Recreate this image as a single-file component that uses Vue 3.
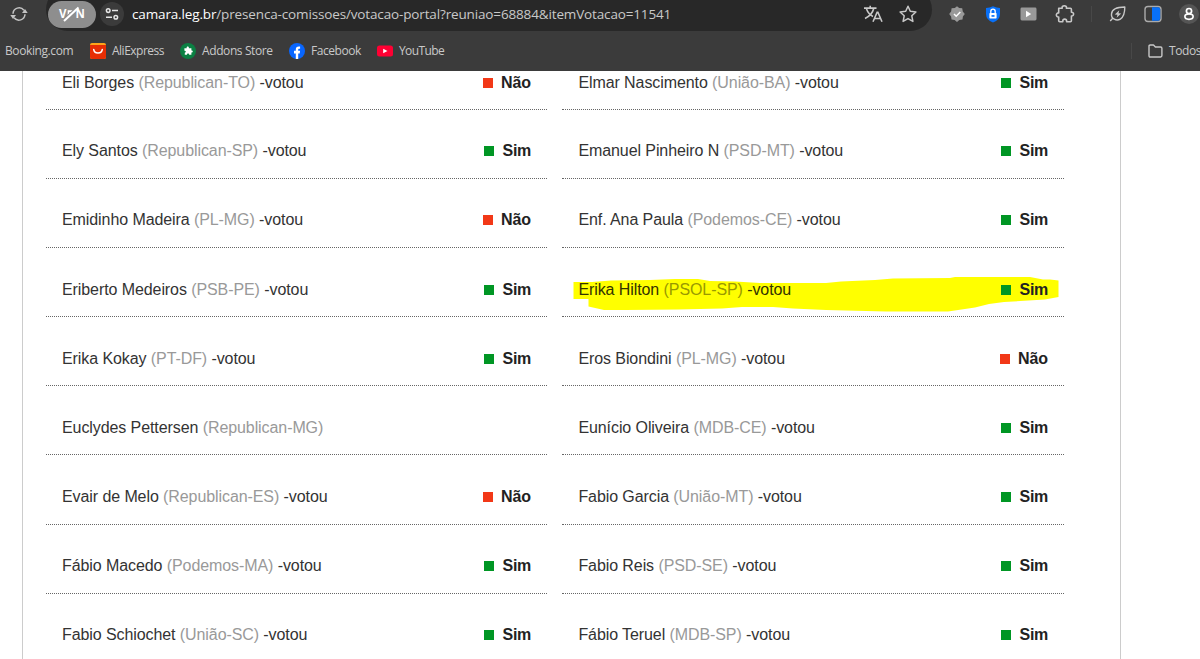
<script setup>
const left = [
  ['Eli Borges', 'Republican-TO', 'Não'],
  ['Ely Santos', 'Republican-SP', 'Sim'],
  ['Emidinho Madeira', 'PL-MG', 'Não'],
  ['Eriberto Medeiros', 'PSB-PE', 'Sim'],
  ['Erika Kokay', 'PT-DF', 'Sim'],
  ['Euclydes Pettersen', 'Republican-MG', ''],
  ['Evair de Melo', 'Republican-ES', 'Não'],
  ['Fábio Macedo', 'Podemos-MA', 'Sim'],
  ['Fabio Schiochet', 'União-SC', 'Sim'],
]
const right = [
  ['Elmar Nascimento', 'União-BA', 'Sim'],
  ['Emanuel Pinheiro N', 'PSD-MT', 'Sim'],
  ['Enf. Ana Paula', 'Podemos-CE', 'Sim'],
  ['Erika Hilton', 'PSOL-SP', 'Sim'],
  ['Eros Biondini', 'PL-MG', 'Não'],
  ['Eunício Oliveira', 'MDB-CE', 'Sim'],
  ['Fabio Garcia', 'União-MT', 'Sim'],
  ['Fabio Reis', 'PSD-SE', 'Sim'],
  ['Fábio Teruel', 'MDB-SP', 'Sim'],
]
const columns = [left, right]
</script>

<template>
  <div class="window">
    <header class="chrome">
      <div class="toolbar">
        <svg class="reload" width="18" height="18" viewBox="0 0 18 18" fill="none" stroke="#c3c3c3" stroke-width="1.5">
          <path d="M3 8.7A6.1 6.1 0 0 1 13.9 5.2M15 9.3A6.1 6.1 0 0 1 4.1 12.8" />
          <path d="M12 7.9h5.7l-2.7-3.9zM6 10.1H.3L3 14z" fill="#c3c3c3" stroke="none" />
        </svg>
        <div class="address">
          <span class="vpn">
            <span>V</span>
            <svg width="9" height="18" viewBox="0 0 9 18" fill="none" stroke="#fff">
              <path d="M1.5 13V6.2H4.5Q6 6.2 6 8" stroke-width="1.7" />
              <path d="M-2.5 15.5L10.5 3.3" stroke="#8e8e8e" stroke-width="4" />
              <path d="M-3 16L11.5 2.5" stroke-width="2" />
            </svg>
            <span>N</span>
          </span>
          <span class="tune">
            <svg width="14" height="14" viewBox="0 0 14 14" fill="none" stroke="#e6e6e6" stroke-width="1.5">
              <circle cx="3.2" cy="3.6" r="1.8" /><path d="M7 3.6h6M1 10.3h6" /><circle cx="10.8" cy="10.3" r="1.8" />
            </svg>
          </span>
          <span class="url"><b>camara.leg.br</b>/presenca-comissoes/votacao-portal?reuniao=68884&amp;itemVotacao=11541</span>
          <svg class="translate" width="20" height="18" viewBox="0 0 20 18" fill="none" stroke="#c8c8c8" stroke-width="1.6">
            <path d="M1 3.1H13.5M7.2 .8V3M3.5 4C5 8 8 10.5 10 11.4M10.8 3.3C9.7 8 6 11.6 2 13.4" />
            <path d="M10 16.7L14.1 7.3H14.9L19 16.7M11.6 13.5H17.4" />
          </svg>
          <svg class="star" width="18" height="18" viewBox="0 0 18 18" fill="none" stroke="#c8c8c8" stroke-width="1.5" stroke-linejoin="round">
            <path d="M9 1.3L11.3 6.3L16.9 7L12.8 10.8L13.9 16.4L9 13.6L4.1 16.4L5.2 10.8L1.1 7L6.7 6.3Z" />
          </svg>
        </div>
        <svg class="badge" width="16" height="16" viewBox="0 0 16 16">
          <path d="M8 .2L10.2 1.9L13.2 2.3L13.8 5.5L15.8 8L13.9 10.5L13.5 13.5L10.3 13.9L8 15.9L5.6 13.9L2.5 13.5L2.1 10.5L.2 8L2.1 5.5L2.6 2.3L5.8 1.9Z" fill="#999" />
          <path d="M5 8l2.2 2.2L11.3 6" fill="none" stroke="#fff" stroke-width="1.5" />
        </svg>
        <svg class="shield" width="16" height="17" viewBox="0 0 16 17">
          <path d="M8 .2Q11.5 1.8 15 2.1V8Q15 13.8 8 16.5Q1 13.8 1 8V2.1Q4.5 1.8 8 .2Z" fill="#0870f8" />
          <rect x="4.4" y="7" width="7.2" height="5.5" rx=".7" fill="#fff" />
          <path d="M5.8 7V5.4a2.2 2.2 0 0 1 4.4 0V7" fill="none" stroke="#fff" stroke-width="1.3" />
          <path d="M6.5 9.1h3v1.7h-3z" fill="#0870f8" />
        </svg>
        <svg class="play" width="17" height="14" viewBox="0 0 17 14">
          <rect x=".5" y=".5" width="16" height="13" rx="1.4" fill="#999" /><path d="M6 3.7v6.6l5.2-3.3z" fill="#fff" />
        </svg>
        <svg class="puzzle" width="20" height="20" viewBox="0 0 20 20" fill="none" stroke="#c8c8c8" stroke-width="1.6" stroke-linejoin="round">
          <path d="M3.7 4.2H7.2C6.8 2.6 7.8 1.8 9.3 1.8S11.8 2.6 11.4 4.2H15.3Q16.4 4.2 16.4 5.3V8.2C19.3 8 19.3 12.2 16.4 12V16.8Q16.4 17.8 15.4 17.8H11.6V17C11.6 14.5 7.8 14.5 7.8 17V17.8H4.7Q3.7 17.8 3.7 16.8V13.1C.6 13.3 .6 8.8 3.7 8.9Z" />
        </svg>
        <i class="divider" />
        <svg class="leaf" width="18" height="18" viewBox="0 0 18 18" fill="none" stroke="#c8c8c8" stroke-width="1.4" stroke-linejoin="round">
          <path d="M15.8 2C8 2 3 3.8 2.5 9C2 13.8 7.4 16.4 11.3 14.1C15.4 11.7 15.8 7.5 15.8 2ZM3.9 13.1L1.2 16" />
          <path d="M10.3 5.2L5.8 9.4L8.5 9.7L7.6 12.8L12.2 8.5L9.5 8.2Z" fill="#c8c8c8" stroke="none" />
        </svg>
        <svg class="panel" width="18" height="18" viewBox="0 0 18 18">
          <rect x="1" y="1.5" width="16" height="15" rx="3" fill="none" stroke="#ababab" stroke-width="1.4" />
          <path d="M8 2.2h6q2.2 0 2.2 2.2v9.2q0 2.2-2.2 2.2H8z" fill="#0870f8" />
        </svg>
        <span class="profile">
          <svg width="20" height="20" viewBox="0 0 20 20" fill="none" stroke="#fff" stroke-width="1.7">
            <circle cx="10" cy="7.1" r="2.6" /><ellipse cx="10" cy="12.6" rx="4.1" ry="2.7" />
          </svg>
        </span>
      </div>
      <nav class="bookmarks">
        <span class="mark booking">Booking.com</span>
        <span class="mark ali">
          <svg width="16" height="16" viewBox="0 0 16 16"><rect width="16" height="16" rx="2" fill="#ffa41b" /><path d="M0 2h16v12q0 2-2 2H2q-2 0-2-2z" fill="#e62e04" /><path d="M3.7 6.4c.5 4.7 8.1 4.7 8.6 0" fill="none" stroke="#fff" stroke-width="1.5" stroke-linecap="round" /></svg>
          <span>AliExpress</span>
        </span>
        <span class="mark addons">
          <svg width="16" height="16" viewBox="0 0 16 16"><circle cx="8" cy="8" r="8" fill="#0b8043" /><path d="M4.4 5.3h2.3C6 2.9 9.3 2.9 8.9 5.3h2.5v2.3c1.9-.4 1.9 2.2 0 1.9v2.2H9.1c.1-1.7-2.2-1.7-2.1 0H4.8V9.8c1.6-.2 1.3-2.2-.4-2z" fill="#fff" /></svg>
          <span>Addons Store</span>
        </span>
        <span class="mark face">
          <svg width="16" height="16" viewBox="0 0 16 16"><circle cx="8" cy="8" r="8" fill="#0866ff" /><path d="M6.8 16v-5.6H5V7.8h1.8V6.7c0-2.7 1.4-3.7 4.3-3.2v2.2c-1.5-.1-1.9.1-1.9 1.1v1h1.9l-.4 2.6H9.2V16z" fill="#fff" /></svg>
          <span>Facebook</span>
        </span>
        <span class="mark tube">
          <svg width="16" height="16" viewBox="0 0 16 16"><rect y="2.5" width="16" height="11" rx="2.5" fill="#ff0033" /><path d="M6.2 5.8v4.4L10.5 8z" fill="#fff" /></svg>
          <span>YouTube</span>
        </span>
        <i class="divider low" />
        <span class="mark all">
          <svg width="15" height="14" viewBox="0 0 15 14" fill="none" stroke="#c8c8c8" stroke-width="1.4" stroke-linejoin="round"><path d="M1 2.2Q1 1 2.2 1H5.5L7.4 3H12.6Q13.9 3 13.9 4.2V11.6Q13.9 13 12.6 13H2.3Q1 13 1 11.7Z" /></svg>
          <span>Todos</span>
        </span>
      </nav>
    </header>

    <main class="page">
      <section class="sheet">
        <ul v-for="(list, c) in columns" :key="c" class="column">
          <li v-for="[name, party, vote] in list" :key="name" class="row">
            <svg v-if="name === 'Erika Hilton'" class="marker" width="488" height="36" viewBox="573 276 488 36">
              <path d="M573.5 282H592L611 280.5L650 280L675 279L698 279L710 281L735 281.5L760 283H826L841 281.5L875 280L893 278.5L950 278L955 277H1030L1043 279.5L1050 279.5L1058.5 280.5V297L1045 299.5L1004 302L989 304L975 307.5L948 311.5H886L826 310L793 308.5L773 307H742L722 308.5L678 309.5L625 310L604 310L588.5 306.5V299H573.5Z" fill="#ff0" />
            </svg>
            <span class="name">{{ name }} <span class="party">({{ party }})</span><template v-if="vote"> -votou</template></span>
            <strong v-if="vote" class="vote" :class="{ no: vote === 'Não' }">{{ vote }}</strong>
          </li>
        </ul>
      </section>
    </main>
  </div>
</template>

<style>
body { margin: 0; overflow: hidden; background: #fff; }
</style>

<style scoped>
.window { width: 1200px; height: 659px; overflow: hidden; display: flex; flex-direction: column; background: #fff; }
.chrome { height: 71px; flex: none; background: #3b3b3b; font-family: "Open Sans", "Noto Sans", sans-serif; overflow: hidden; }
svg { display: block; flex: none; }
.toolbar { height: 31px; display: flex; align-items: center; }
.toolbar > svg, .profile, .toolbar > .divider { margin-top: -3px; }
.reload { margin-left: 10px; }
.address { width: 886px; height: 43px; flex: none; box-sizing: border-box; margin: -12px 0 0 18px; padding: 9px 15px 0 2px; border-radius: 22px; background: #282828; display: flex; align-items: center; }
.vpn { width: 48px; height: 27px; border-radius: 14px; background: #8e8e8e; display: flex; align-items: center; justify-content: center; flex: none; color: #fff; font: 700 11.5px/18px "Open Sans", sans-serif; }
.vpn svg { overflow: visible; }
.tune { width: 24px; height: 24px; border-radius: 50%; background: #3b3b3b; display: flex; align-items: center; justify-content: center; margin-left: 4px; flex: none; }
.url { margin-left: 8px; font-size: 13.5px; line-height: 20px; letter-spacing: -.145px; color: #c9c9c9; white-space: nowrap; }
.url b { font-weight: 400; color: #fff; }
.translate { margin-left: auto; }
.star { margin-left: 16px; }
.badge { margin-left: 17px; }
.shield { margin-left: 20px; }
.play { margin-left: 19px; }
.puzzle { margin-left: 18px; }
.divider { width: 1px; height: 16px; margin-left: 16px; background: #484848; flex: none; }
.leaf { margin-left: 17px; }
.panel { margin-left: 17px; }
.profile { width: 20px; height: 20px; margin-left: 17px; border-radius: 50%; background: #555; flex: none; }
.bookmarks { height: 39px; display: flex; align-items: center; color: #c9c9c9; font-size: 12px; line-height: 20px; letter-spacing: -.4px; white-space: nowrap; }
.mark { display: flex; align-items: center; flex: none; box-sizing: border-box; }
.mark svg { margin-right: 6px; }
.booking { width: 90px; padding-left: 5px; }
.ali { width: 90px; letter-spacing: -.5px; }
.addons { width: 109px; }
.face { width: 88px; letter-spacing: -.45px; }
.tube { letter-spacing: -.6px; }
.divider.low { margin-left: auto; }
.all { width: 52px; margin-left: 16px; }
.page { flex: 1; min-height: 0; overflow: hidden; }
.sheet { width: 1018px; height: 588px; margin-left: 22px; padding: 0 56px 0 23px; border: solid #ccc; border-width: 0 1px; display: grid; grid-template-columns: 501px 501.6px; gap: 15.4px; }
.column { list-style: none; margin: -29.8px 0 0; padding: 0; }
.row { position: relative; height: 69.05px; box-sizing: border-box; padding: 14.5px 16px 0; border-bottom: 1px dotted #666; display: flex; align-items: center; justify-content: space-between; font: 16px/20px "Liberation Sans", Arial, sans-serif; color: #333; white-space: nowrap; }
.row:first-child { padding-top: 15.6px; }
.row:nth-child(2), .row:nth-child(3) { padding-top: 13.2px; }
.name, .vote { position: relative; }
.name { letter-spacing: -.085px; }
.party { color: #999; }
.marker { position: absolute; left: 10.6px; top: 28px; }
.row:has(.marker) .name { color: #333300; }
.row:has(.marker) .party { color: #999900; }
.vote { display: flex; align-items: center; gap: 8.7px; letter-spacing: -.3px; color: #222; }
.vote.no { gap: 8px; letter-spacing: -.1px; }
.vote::before { content: ""; width: 10px; height: 10px; background: #009624; }
.vote.no::before { background: #f23817; }
</style>
